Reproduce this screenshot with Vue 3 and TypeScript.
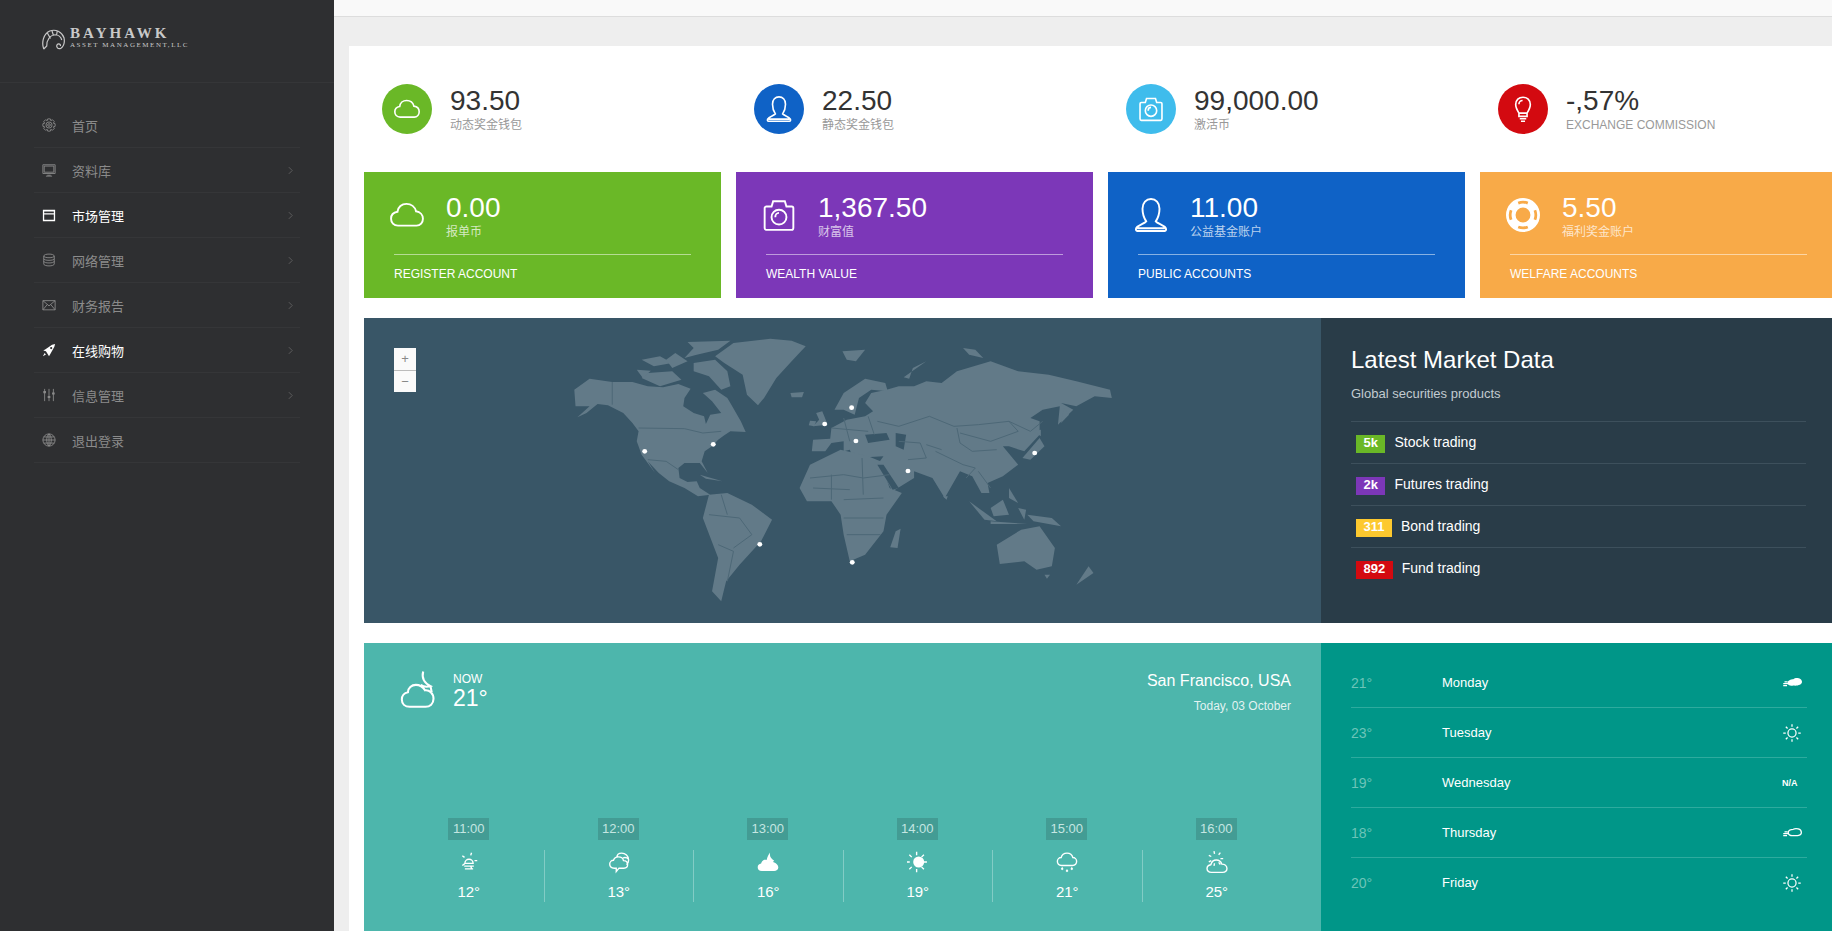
<script setup lang="ts">
type Icon = { s?: string; f?: string }

const circle = (cx: number, cy: number, r: number) =>
  `M${cx - r} ${cy}a${r} ${r} 0 1 0 ${r * 2} 0a${r} ${r} 0 1 0 ${-r * 2} 0Z`

const rays = (cx: number, cy: number, a: number, b: number, n = 8) => {
  let d = ''
  for (let i = 0; i < n; i++) {
    const t = (i * Math.PI * 2) / n
    d += `M${(cx + Math.cos(t) * a).toFixed(1)} ${(cy + Math.sin(t) * a).toFixed(1)}L${(cx + Math.cos(t) * b).toFixed(1)} ${(cy + Math.sin(t) * b).toFixed(1)}`
  }
  return d
}

const cloudD = 'M7.5 26C3.5 26 1 23 1 19.5 1 16 3.5 13.5 7 13 7.5 8.5 11 5.5 15.5 5.5 20 5.5 23.5 8.5 24.5 12.5 28.5 13 31 16 31 19.5 31 23 28.5 26 25 26Z'
const smallCloud = 'M10 29C6.5 29 4 26.5 4 23.5 4 20.5 6 18.5 9 18 9.5 14.5 12.5 12 16 12 19.5 12 22.5 14.5 23 18 26 18.5 28 20.5 28 23.5 28 26.5 25.5 29 22 29Z'
const moon = 'M19 2C18 6 19 11 25 14 22 15 19 14.5 17 13'

const icons: Record<string, Icon> = {
  cloud: { s: cloudD },
  person: { s: 'M11.5 22C9 18 8 13 8 10 8 4.5 11.5 1 16 1 20.5 1 24 4.5 24 10 24 13 23 18 20.5 22 22.5 24.5 28 25 30 28.5 30.5 30 30 31 29 31H3C2 31 1.5 30 2 28.5 4 25 9.5 24.5 11.5 22ZM3 28.5H29' },
  camera: { s: `M2.5 9.5C2.5 8.5 3.5 8 4 8H9L10.5 3H21.5L23 8H28C29 8 29.5 8.5 29.5 9.5V28C29.5 29 29 30 28 30H4C3 30 2.5 29 2.5 28Z${circle(16, 18, 7)}M12.5 18A3.5 4 0 0 1 16 14` },
  bulb: { s: 'M11 21C8.5 17 7 14 7 10.5 7 5 11 1.5 16 1.5 21 1.5 25 5 25 10.5 25 14 23.5 17 21 21ZM11 21V25H21V21M12 28H20M13.5 31H18.5M11 10C11 7.5 13 5.5 15.5 5.5' },
  buoy: { f: 'M16 0A16 16 0 1 0 16 32 16 16 0 1 0 16 0ZM16 9A7 7 0 1 1 16 23 7 7 0 1 1 16 9ZM11 3.6A13.5 13.5 0 0 1 21 3.6L20 6A11 11 0 0 0 12 6ZM11 28.4A13.5 13.5 0 0 0 21 28.4L20 26A11 11 0 0 1 12 26ZM3.6 11A13.5 13.5 0 0 0 3.6 21L6 20A11 11 0 0 1 6 12ZM28.4 11A13.5 13.5 0 0 1 28.4 21L26 20A11 11 0 0 0 26 12Z' },
  gear: { s: `M13 2H19L20 6 24 4 28 8 26 12 30 13V19L26 20 28 24 24 28 20 26 19 30H13L12 26 8 28 4 24 6 20 2 19V13L6 12 4 8 8 4 12 6Z${circle(16, 16, 7)}${circle(16, 16, 3)}` },
  monitor: { s: 'M2 4H30V24H2ZM5 7H27V21H5ZM12 28H20M9 30H23' },
  window: { f: 'M2 4H30V30H2ZM5 8V12H27V8ZM5 15V27H27V15Z' },
  database: { s: 'M4 7C4 1 28 1 28 7V25C28 31 4 31 4 25ZM4 7C4 12 28 12 28 7M4 13C4 18 28 18 28 13M4 19C4 24 28 24 28 19' },
  mail: { s: 'M2 6H30V27H2ZM2 6L16 18 30 6M2 27L12 15M30 27L20 15' },
  rocket: { f: 'M30 2L23 4 8 14 3 17 9 19 14 27 16 30 19 25 28 9ZM21 9A2.5 2.5 0 1 0 21 14 2.5 2.5 0 1 0 21 9ZM6 23L2 30 9 26Z' },
  sliders: { s: 'M6 2V30M16 2V30M26 2V30', f: 'M3 7H9V12H3ZM13 18H19V23H13ZM23 10H29V15H23Z' },
  globe: { s: `${circle(16, 16, 14)}M2 16H30M4 9H28M4 23H28M16 2C9 8 9 24 16 30M16 2C23 8 23 24 16 30M16 2V30` },
  moonCloud: { s: `M8 31C4 31 1.5 28.5 1.5 25 1.5 22 3.5 19.5 6.5 19 6.5 15.5 9.5 13 13 13 16.5 13 19 15 20.5 17.5 24 17 27.5 20 27.5 24.5 27.5 28.5 24.5 31 21 31Z${moon}M25 14L26 19` },
  haze: { s: `${rays(16, 14, 8, 12, 5).replace(/Z/g, '')}M10 18A6 6 0 0 1 22 18ZM9 22H23M10 26H22`, },
  storm: { s: 'M9 25C5 25 2.5 22.5 2.5 19 2.5 16 5 13.5 8 13.5 9 10 11.5 8.5 15 8.5 19 8.5 22 11 22.5 14 26 14 28.5 16.5 28.5 20 28.5 23 26 25 23 25H16L12 30V25ZM13 9C13 5 16 3 20 3 25 3 30 7 30 13 30 16 29 18 27 20M22 10C25 9 28 10 30 12' },
  moonFill: { f: `M7 29C3 29 1 26.5 1 23.5 1 20.5 3 18.5 6 18 7 14 10 12 14 13 15 8 17 5 19 2 18 8 20 11 25 14L23 16C27 17 31 20 31 24 31 27 28 29 25 29Z` },
  sunFill: { s: rays(14, 16, 10, 15), f: circle(17, 16, 8) },
  rain: { s: 'M8 21C4.5 21 2 18.5 2 15 2 12 4.5 9.5 7.5 9.5 8.5 5.5 12 3 16 3 20 3 23.5 5.5 24.5 9.5 27.5 9.5 30 12 30 15 30 18.5 27.5 21 24 21Z', f: 'M9 23L11 26 9 28 7 26ZM16 26L18 29 16 31 14 29ZM23 23L25 26 23 28 21 26Z' },
  sunCloud: { s: `${rays(14, 11, 7, 11, 7)}M8 31C4 31 1.5 28.5 1.5 25.5 1.5 22.5 4 20.5 7 20 8 16 11 13 15 13 19 13 22 16 23 19 27 19 30.5 21.5 30.5 25.5 30.5 28.5 28 31 24 31Z` },
  windFill: { s: 'M2 17H10M2 20H8M4 14H9', f: 'M9 16C9 12 14 10 18 10 22 6 32 8 32 14 32 19 24 21 18 20 14 21 9 20 9 16Z' },
  windLine: { s: 'M2 17H10M2 20H8M4 14H9M10 15C10 12 14 10 18 10 22 8 31 9 31 15 31 20 24 21 18 20 14 21 10 19 10 15Z' },
  sunLine: { s: `${circle(16, 16, 6.5)}${rays(16, 16, 10, 14)}` },
}

const menu = [
  { label: '首页', icon: 'gear', active: false, arrow: false },
  { label: '资料库', icon: 'monitor', active: false, arrow: true },
  { label: '市场管理', icon: 'window', active: true, arrow: true },
  { label: '网络管理', icon: 'database', active: false, arrow: true },
  { label: '财务报告', icon: 'mail', active: false, arrow: true },
  { label: '在线购物', icon: 'rocket', active: true, arrow: true },
  { label: '信息管理', icon: 'sliders', active: false, arrow: true },
  { label: '退出登录', icon: 'globe', active: false, arrow: false },
]

const stats = [
  { value: '93.50', label: '动态奖金钱包', icon: 'cloud', tone: 'green' },
  { value: '22.50', label: '静态奖金钱包', icon: 'person', tone: 'blue' },
  { value: '99,000.00', label: '激活币', icon: 'camera', tone: 'cyan' },
  { value: '-,57%', label: 'EXCHANGE COMMISSION', icon: 'bulb', tone: 'red' },
]

const cards = [
  { value: '0.00', label: '报单币', foot: 'REGISTER ACCOUNT', icon: 'cloud', tone: 'green' },
  { value: '1,367.50', label: '财富值', foot: 'WEALTH VALUE', icon: 'camera', tone: 'purple' },
  { value: '11.00', label: '公益基金账户', foot: 'PUBLIC ACCOUNTS', icon: 'person', tone: 'blue' },
  { value: '5.50', label: '福利奖金账户', foot: 'WELFARE ACCOUNTS', icon: 'buoy', tone: 'orange' },
]

const market = [
  { n: '5k', text: 'Stock trading', tone: 'green' },
  { n: '2k', text: 'Futures trading', tone: 'purple' },
  { n: '311', text: 'Bond trading', tone: 'yellow' },
  { n: '892', text: 'Fund trading', tone: 'red' },
]

const hours = [
  { t: '11:00', icon: 'haze', deg: '12°' },
  { t: '12:00', icon: 'storm', deg: '13°' },
  { t: '13:00', icon: 'moonFill', deg: '16°' },
  { t: '14:00', icon: 'sunFill', deg: '19°' },
  { t: '15:00', icon: 'rain', deg: '21°' },
  { t: '16:00', icon: 'sunCloud', deg: '25°' },
]

const days = [
  { deg: '21°', day: 'Monday', icon: 'windFill' },
  { deg: '23°', day: 'Tuesday', icon: 'sunLine' },
  { deg: '19°', day: 'Wednesday', icon: '' },
  { deg: '18°', day: 'Thursday', icon: 'windLine' },
  { deg: '20°', day: 'Friday', icon: 'sunLine' },
]

// traced in a 1568x930 space, squeezed to 960x310 by the svg
const land = [
  '350,215 375,182 412,192 445,192 470,205 495,208 520,198 540,212 530,240 528,265 545,285 562,295 565,318 572,290 590,285 575,250 560,225 580,215 600,240 607,262 622,310 630,342 605,340 595,352 585,365 575,385 563,400 558,430 568,465 555,435 530,435 520,450 522,480 535,492 550,490 555,510 572,530 552,535 530,510 505,490 488,465 470,430 482,465 460,410 452,370 455,340 445,315 430,285 405,262 388,258 370,285 355,298 375,265 352,265',
  '535,72 605,68 585,95 550,110 530,120 545,90',
  '545,135 580,125 600,160 605,205 590,215 570,175 545,160',
  '470,165 510,160 525,185 490,205 460,180',
  '460,125 490,115 510,135 480,145',
  '515,105 535,130 510,150 500,125',
  '452,155 475,158 462,180',
  '580,115 610,75 670,62 705,68 728,85 705,130 680,180 660,240 650,262 632,230 625,170 595,135',
  '703,225 725,222 722,238 705,238',
  '788,100 825,95 810,130 795,125',
  '888,178 925,130 903,150 897,182',
  '745,285 755,280 764,320 740,325 750,305',
  '735,308 745,310 742,325 733,322',
  '775,275 790,225 825,182 858,195 862,220 835,215 815,240 808,290 790,275',
  '738,400 740,365 768,362 770,330 795,305 825,295 838,280 825,255 835,225 860,215 880,205 905,205 925,190 950,195 975,160 1030,130 1075,160 1125,170 1170,190 1225,215 1228,240 1200,235 1170,265 1145,255 1165,275 1140,320 1143,265 1115,275 1095,300 1110,310 1110,350 1085,400 1060,385 1050,385 1075,440 1050,475 1025,495 1028,525 1015,525 1000,475 980,460 955,540 935,480 905,460 905,480 870,520 845,440 855,415 805,420 800,395 790,400 790,370 770,375 760,400',
  '718,510 735,440 785,395 830,415 850,430 865,510 885,525 860,590 855,640 825,710 800,730 790,650 785,590 770,550 730,550',
  '866,688 875,640 883,632 878,690',
  '570,530 600,525 640,560 673,605 655,670 620,740 598,790 590,850 575,820 585,720 560,600',
  '1040,680 1080,635 1110,625 1135,690 1130,745 1105,755 1085,730 1045,738',
  '1118,770 1127,770 1122,782',
  '1170,800 1190,745 1198,765',
  '1082,420 1110,360 1118,385 1095,425',
  '1100,340 1112,335 1112,355',
  '1145,315 1150,270 1158,290',
  '995,550 1040,610 1020,605',
  '1030,570 1050,545 1060,590 1035,595',
  '1030,610 1090,618 1030,618',
  '1075,570 1088,575 1085,605',
  '1090,590 1130,600 1145,625 1100,610',
  '1060,510 1075,555 1060,540',
  '555,470 592,490 565,482',
  '952,535 960,535 958,545',
  '985,90 1005,95 1018,120 995,110',
]
const water = [
  '825,350 860,345 865,365 830,375',
  '875,345 892,350 888,395 875,385',
  '845,440 855,440 880,510 870,515',
]
const borders = 'M455 330L530 332 560 345 590 340M412 192V260M470 425L500 430 520 455M735 480L790 470 822 480 865 470M770 470V545M820 420L822 530M790 545L855 540M790 600L855 600M795 650L850 650M740 510L800 515M570 590L620 600 640 650 610 690M590 530L600 590M585 680L610 700 600 790M770 330L830 340M790 300L800 370M830 295L840 350M845 310L880 325 930 295 970 325 1010 320 1060 310 1095 340 1115 310M975 330L980 375 1000 400 1040 395M980 345L1030 370 1075 340 1060 310M940 400L985 440 1005 450 990 480M880 370L915 375 925 420 895 425M925 380L950 395M1010 460L1030 510'
const pins = [[465, 400], [577, 379], [759, 318], [803, 269], [810, 369], [895, 459], [1102, 405], [653, 679], [804, 733]]
</script>

<template>
  <div class="app">
    <aside class="side">
      <div class="brand">
        <svg class="brand-mark" viewBox="0 0 32 32" fill="none" stroke="currentColor" stroke-width="1.6">
          <path d="M3 28C0 20 2 8 11 4 19 1 27 5 30 13 31 18 30 24 26 27 22 29 19 25 21 22 23 20 26 22 25 24M3 28L7 24C7 16 11 10 18 9 22 9 26 12 27 16M8 7L12 14M14 4L16 10M21 4L20 10" />
        </svg>
        <div class="brand-text">
          <div class="brand-name">BAYHAWK</div>
          <div class="brand-sub">ASSET MANAGEMENT,LLC</div>
        </div>
      </div>
      <ul class="menu">
        <li v-for="m in menu" :key="m.label" :class="['menu-item', { active: m.active }]">
          <svg class="menu-icon" viewBox="0 0 32 32" fill="none" stroke="currentColor" stroke-width="2">
            <path v-if="icons[m.icon].s" :d="icons[m.icon].s" />
            <path v-if="icons[m.icon].f" :d="icons[m.icon].f" fill="currentColor" fill-rule="evenodd" stroke="none" />
          </svg>
          <span class="menu-label">{{ m.label }}</span>
          <svg v-if="m.arrow" class="chev" viewBox="0 0 6 10" fill="none" stroke="currentColor" stroke-width="1">
            <path d="M1 1l4 4-4 4" />
          </svg>
        </li>
      </ul>
    </aside>

    <main class="main">
      <div class="topbar"></div>
      <div class="panel">
        <section class="grid stats">
          <div v-for="s in stats" :key="s.value" class="stat">
            <span :class="['disc', s.tone]">
              <svg class="disc-icon" viewBox="0 0 32 32" fill="none" stroke="currentColor" stroke-width="2">
                <path v-if="icons[s.icon].s" :d="icons[s.icon].s" />
              </svg>
            </span>
            <div>
              <div class="num">{{ s.value }}</div>
              <div class="cap">{{ s.label }}</div>
            </div>
          </div>
        </section>

        <section class="grid">
          <div v-for="c in cards" :key="c.foot" :class="['card', c.tone]">
            <div class="card-top">
              <svg class="card-icon" viewBox="0 0 32 32" fill="none" stroke="currentColor" stroke-width="1.8">
                <path v-if="icons[c.icon].s" :d="icons[c.icon].s" />
                <path v-if="icons[c.icon].f" :d="icons[c.icon].f" fill="currentColor" fill-rule="evenodd" stroke="none" />
              </svg>
              <div>
                <div class="num">{{ c.value }}</div>
                <div class="cap">{{ c.label }}</div>
              </div>
            </div>
            <div class="card-foot">{{ c.foot }}</div>
          </div>
        </section>

        <section class="split">
          <div class="map">
            <svg class="world" viewBox="0 0 1568 930" preserveAspectRatio="none">
              <polygon v-for="(p, i) in land" :key="i" :points="p" fill="#627a88" />
              <polygon v-for="(p, i) in water" :key="'w' + i" :points="p" fill="#395667" />
              <path :d="borders" fill="none" stroke="#4d6877" stroke-width="1" vector-effect="non-scaling-stroke" />
              <ellipse v-for="(p, i) in pins" :key="'p' + i" :cx="p[0]" :cy="p[1]" rx="4" ry="7" fill="#fff" />
            </svg>
            <div class="zoom">
              <span>+</span>
              <span>−</span>
            </div>
          </div>
          <div class="market">
            <h2>Latest Market Data</h2>
            <p>Global securities products</p>
            <ul>
              <li v-for="m in market" :key="m.text">
                <span :class="['badge', m.tone]">{{ m.n }}</span>{{ m.text }}
              </li>
            </ul>
          </div>
        </section>

        <section class="split weather-row">
          <div class="weather">
            <div class="weather-top">
              <div class="now">
                <svg class="now-icon" viewBox="0 0 32 32" fill="none" stroke="currentColor" stroke-width="1.7">
                  <path :d="icons.moonCloud.s" />
                </svg>
                <div>
                  <div class="now-label">NOW</div>
                  <div class="now-deg">21°</div>
                </div>
              </div>
              <div class="place">
                <div class="city">San Francisco, USA</div>
                <div class="date">Today, 03 October</div>
              </div>
            </div>
            <div class="hours">
              <div v-for="h in hours" :key="h.t" class="hour">
                <span class="tag">{{ h.t }}</span>
                <div class="hour-body">
                  <svg class="hour-icon" viewBox="0 0 32 32" fill="none" stroke="currentColor" stroke-width="2">
                    <path v-if="icons[h.icon].s" :d="icons[h.icon].s" />
                    <path v-if="icons[h.icon].f" :d="icons[h.icon].f" fill="currentColor" stroke="none" />
                  </svg>
                  <span class="hour-deg">{{ h.deg }}</span>
                </div>
              </div>
            </div>
          </div>
          <ul class="days">
            <li v-for="d in days" :key="d.day">
              <span class="day-deg">{{ d.deg }}</span>
              <span class="day-name">{{ d.day }}</span>
              <svg v-if="d.icon" class="day-icon" viewBox="0 0 32 32" fill="none" stroke="currentColor" stroke-width="2">
                <path v-if="icons[d.icon].s" :d="icons[d.icon].s" />
                <path v-if="icons[d.icon].f" :d="icons[d.icon].f" fill="currentColor" stroke="none" />
              </svg>
              <span v-else class="na">N/A</span>
            </li>
          </ul>
        </section>
      </div>
    </main>
  </div>
</template>

<style>
html,
body {
  margin: 0;
  height: 100%;
  overflow: hidden;
}
</style>

<style scoped>
.app {
  display: flex;
  height: 931px;
  overflow: hidden;
  font-family: "Liberation Sans", "Noto Sans CJK SC", sans-serif;
  color: #333;
}

ul {
  list-style: none;
  margin: 0;
  padding: 0;
}

.side {
  flex: none;
  width: 334px;
  background: #2e2f31;
}

.brand {
  height: 83px;
  box-sizing: border-box;
  border-bottom: 1px solid #353638;
  padding: 26px 0 0 41px;
  display: flex;
  gap: 4px;
  color: #c9c9c9;
}

.brand-mark {
  width: 25px;
  height: 24px;
  margin-top: 2px;
}

.brand-name {
  font-family: "Liberation Serif", serif;
  font-weight: 700;
  font-size: 15px;
  line-height: 14px;
  letter-spacing: 3.1px;
}

.brand-sub {
  font-family: "Liberation Serif", serif;
  font-size: 7px;
  line-height: 11px;
  letter-spacing: 1.55px;
}

.menu {
  margin: 20px 34px 0;
}

.menu-item {
  display: flex;
  align-items: center;
  height: 44px;
  padding-left: 8px;
  padding-right: 7px;
  border-bottom: 1px solid #353638;
  color: #8b8b8b;
  font-size: 13px;
}

.menu-item.active {
  color: #fff;
}

.menu-icon {
  width: 14px;
  height: 14px;
  margin-right: 16px;
}

.menu-label {
  flex: 1;
}

.chev {
  width: 5px;
  height: 9px;
  color: #666;
}

.main {
  flex: 1;
  min-width: 0;
  background: #eee;
  overflow: hidden;
}

.topbar {
  height: 16px;
  background: #f9f9f9;
  border-bottom: 1px solid #ddd;
}

.panel {
  width: 1488px;
  min-height: 900px;
  margin: 29px 0 0 15px;
  padding-left: 15px;
  background: #fff;
}

.grid {
  width: 1473px;
  display: grid;
  grid-template-columns: repeat(4, 357px);
  gap: 15px;
}

.stats {
  height: 126px;
}

.stat {
  display: flex;
  align-items: center;
  padding-left: 18px;
  gap: 18px;
}

.disc {
  width: 50px;
  height: 50px;
  border-radius: 50%;
  display: flex;
  align-items: center;
  justify-content: center;
  color: #fff;
}

.disc-icon {
  width: 26px;
  height: 26px;
}

.num {
  font-size: 28px;
  line-height: 31px;
}

.cap {
  font-size: 12px;
  line-height: 18px;
  color: #999;
}

.green { background: #6ab827; }
.blue { background: #0f62c6; }
.cyan { background: #3fbcec; }
.red { background: #d30a10; }
.purple { background: #7c37b8; }
.orange { background: #f8aa48; }
.yellow { background: #fdc92f; }

.card {
  height: 126px;
  box-sizing: border-box;
  padding: 0 30px;
  color: #fff;
}

.card .cap {
  color: rgba(255, 255, 255, 0.72);
}

.card-top {
  height: 83px;
  box-sizing: border-box;
  padding-top: 20px;
  display: flex;
  border-bottom: 1px solid rgba(255, 255, 255, 0.5);
}

.card-icon {
  width: 34px;
  height: 34px;
  margin: 6px 22px 0 -4px;
}

.card-foot {
  padding-top: 10px;
  font-size: 12px;
  line-height: 18px;
}

.split {
  width: 1473px;
  display: flex;
  margin-top: 20px;
  height: 305px;
}

.map {
  width: 957px;
  position: relative;
  overflow: hidden;
  background: #395667;
}

.world {
  position: absolute;
  left: -4px;
  top: 0;
  width: 960px;
  height: 310px;
}

.zoom {
  position: absolute;
  left: 30px;
  top: 30px;
  width: 22px;
  background: #fafafa;
  color: #888;
  font-size: 13px;
  text-align: center;
}

.zoom span {
  display: block;
  height: 22px;
  line-height: 21px;
}

.zoom span + span {
  box-sizing: border-box;
  border-top: 1px solid #bbb;
}

.market {
  flex: 1;
  box-sizing: border-box;
  padding: 28px 31px 0 30px;
  background: #293c48;
  color: #fff;
}

.market h2 {
  margin: 0;
  font-size: 24px;
  font-weight: 400;
  line-height: 28px;
}

.market p {
  margin: 12px 0 20px;
  font-size: 13px;
  line-height: 15px;
  color: #c2cbd0;
}

.market li {
  height: 41px;
  border-top: 1px solid #3d505c;
  display: flex;
  padding-top: 13px;
  box-sizing: content-box;
  font-size: 14px;
  line-height: 15px;
  height: 28px;
}

.badge {
  height: 18px;
  line-height: 16px;
  padding: 0 7.5px;
  margin: 0 9px 0 5px;
  font-size: 13px;
  font-weight: 700;
}

.weather-row {
  height: 400px;
}

.weather {
  width: 957px;
  box-sizing: border-box;
  padding: 0 30px;
  background: #4db6ac;
  color: #fff;
}

.weather-top {
  height: 175px;
  box-sizing: border-box;
  padding-top: 28px;
  display: flex;
  justify-content: space-between;
}

.now {
  display: flex;
  gap: 14px;
}

.now-icon {
  width: 39px;
  height: 39px;
  margin: -2px 0 0 6px;
}

.now-label {
  font-size: 12px;
  line-height: 16px;
}

.now-deg {
  font-size: 23px;
  line-height: 22px;
}

.place {
  text-align: right;
}

.city {
  font-size: 16px;
  line-height: 20px;
}

.date {
  margin-top: 6px;
  font-size: 12px;
  line-height: 18px;
  color: rgba(255, 255, 255, 0.85);
}

.hours {
  display: grid;
  grid-template-columns: repeat(6, 1fr);
}

.hour {
  display: flex;
  flex-direction: column;
  align-items: center;
}

.tag {
  width: 41px;
  height: 22px;
  line-height: 22px;
  text-align: center;
  font-size: 13px;
  background: #439c94;
  color: #c5e6e2;
}

.hour-body {
  align-self: stretch;
  margin-top: 10px;
  height: 52px;
  display: flex;
  flex-direction: column;
  align-items: center;
}

.hour + .hour .hour-body {
  border-left: 1px solid rgba(255, 255, 255, 0.3);
}

.hour-icon {
  width: 22px;
  height: 24px;
}

.hour-deg {
  margin-top: 8px;
  font-size: 15px;
  line-height: 20px;
}

.days {
  flex: 1;
  box-sizing: border-box;
  padding: 15px 30px 0;
  background: #009688;
  color: #fff;
}

.days li {
  height: 49px;
  border-bottom: 1px solid #2dab9e;
  display: flex;
  align-items: center;
  font-size: 13px;
}

.days li:last-child {
  border-bottom: 0;
}

.day-deg {
  width: 91px;
  font-size: 14px;
  color: #6dc4b9;
}

.day-name {
  flex: 1;
}

.day-icon {
  width: 20px;
  height: 20px;
  margin-right: 5px;
}

.na {
  width: 20px;
  margin-right: 5px;
  font-size: 9px;
  font-weight: 700;
}
</style>
